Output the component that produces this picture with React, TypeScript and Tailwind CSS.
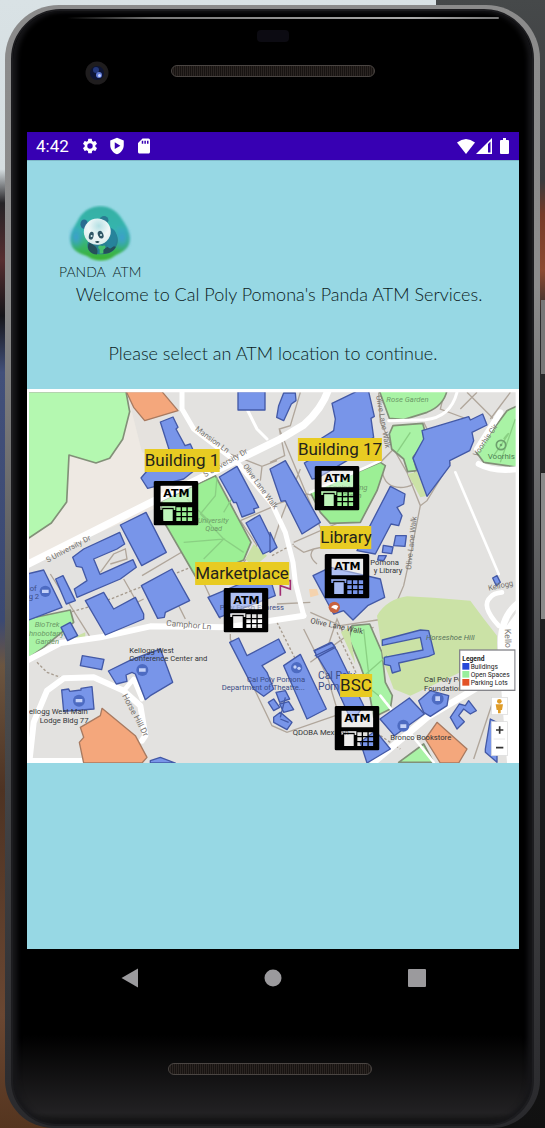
import React from "react";

type Place = {
  id: string;
  name: string;
  label: [number, number];
  pin: [number, number];
};

const MAP_W = 492;
const MAP_H = 374;

const places: Place[] = [
  { id: "b1", name: "Building 1", label: [155, 60], pin: [149, 92] },
  { id: "b17", name: "Building 17", label: [313, 49], pin: [310, 77] },
  { id: "library", name: "Library", label: [319, 137], pin: [320, 165] },
  { id: "market", name: "Marketplace", label: [215, 173], pin: [219, 199] },
  { id: "bsc", name: "BSC", label: [329, 285], pin: [330, 317] },
];

const at = ([x, y]: [number, number]) => ({
  left: `${(x / MAP_W) * 100}%`,
  top: `${(y / MAP_H) * 100}%`,
});

function AtmIcon() {
  return (
    <svg viewBox="0 0 134 132" className="block w-full" aria-hidden="true">
      <rect x="21" y="14" width="94" height="49" fill="#fff" opacity=".4" />
      <path
        fillRule="evenodd"
        d="M5 0H129Q134 0 134 5V127Q134 132 129 132H5Q0 132 0 127V5Q0 0 5 0ZM21 14V63H115V14ZM20 75V86H26V80H60V86H65V75ZM29 84V119H57V84ZM68 78V89H81V78ZM85 78V89H98V78ZM102 78V89H115V78ZM68 93V104H81V93ZM85 93V104H98V93ZM102 93V104H115V93ZM68 108V119H81V108ZM85 108V119H98V108ZM102 108V119H115V108Z"
      />
      <path fill="#fff" opacity=".35" d="M29 84H57V119H29ZM20 75H65V80H20Z" />
      <text
        x="68"
        y="49"
        textAnchor="middle"
        fontSize="33"
        fontWeight="bold"
        fontFamily="DejaVu Sans, sans-serif"
      >
        ATM
      </text>
    </svg>
  );
}

function Panda() {
  return (
    <svg viewBox="0 0 190 170" className="block w-16" aria-hidden="true">
      <defs>
        <linearGradient id="blob" x1="0" y1="0" x2="0" y2="1">
          <stop offset="0" stopColor="#35b0a4" />
          <stop offset=".45" stopColor="#36b5ae" />
          <stop offset="1" stopColor="#3bb22a" />
        </linearGradient>
        <radialGradient id="side" cx=".5" cy=".5" r=".5">
          <stop offset="0" stopColor="#3b9fd0" />
          <stop offset="1" stopColor="#3b9fd0" stopOpacity="0" />
        </radialGradient>
        <radialGradient id="face" cx=".6" cy=".3" r=".8">
          <stop offset="0" stopColor="#b4e0e4" />
          <stop offset=".5" stopColor="#f0f8f8" />
          <stop offset="1" stopColor="#d7e8e8" />
        </radialGradient>
        <filter id="soft" x="-10%" y="-10%" width="120%" height="120%">
          <feGaussianBlur stdDeviation="3" />
        </filter>
      </defs>
      <g filter="url(#soft)">
        <path
          d="M92 4C124 2 148 20 163 46C178 68 188 92 181 115C174 136 153 143 137 152C117 168 80 170 60 154C42 145 16 140 10 117C3 94 14 71 27 50C40 23 61 6 92 4Z"
          fill="url(#blob)"
        />
        <ellipse cx="24" cy="96" rx="24" ry="38" fill="url(#side)" />
        <ellipse cx="160" cy="98" rx="30" ry="42" fill="url(#side)" />
      </g>
      <path d="M114 72C142 70 156 99 144 122C133 149 91 151 71 141C52 131 56 109 65 100Z" fill="#287f92" />
      <path d="M63 111C52 129 66 146 86 147C91 134 84 124 76 119ZM100 143C115 150 139 136 142 124C121 119 106 127 100 143Z" fill="#25505b" />
      <path d="M121 67C151 69 154 119 126 129C112 128 112 104 120 93Z" fill="#27839b" />
      <ellipse cx="48" cy="57" rx="11" ry="14" fill="#2a6d91" />
      <ellipse cx="107" cy="45" rx="13" ry="12" fill="#2a7c91" />
      <ellipse cx="87" cy="79" rx="40" ry="39" fill="url(#face)" transform="rotate(-12 87 79)" />
      <ellipse cx="69" cy="91" rx="7" ry="12" fill="#315767" transform="rotate(12 69 91)" />
      <ellipse cx="97" cy="88" rx="8" ry="12" fill="#315767" transform="rotate(-22 97 88)" />
      <circle cx="70" cy="92" r="3" fill="#d9f3f3" />
      <circle cx="98" cy="89" r="3" fill="#d9f3f3" />
      <path d="M80 109Q87 105 94 109Q87 116 80 109Z" fill="#204650" />
      <path d="M94 144V132C84 125 93 116 102 122C110 116 117 127 105 132V144Z" fill="#44bf6b" />
    </svg>
  );
}

function CampusMap() {
  return (
    <svg
      viewBox="0 0 1476 1122"
      className="block w-full"
      role="img"
      aria-label="Campus map"
      fontFamily="Roboto, sans-serif"
    >
      <rect width="1476" height="1122" fill="#e3e2e0" />
      <path d="M6 8H310L365 90L450 330L0 525Z" fill="#eee9e3" />
      <path d="M300 10L345 190L440 230L400 80Z" fill="#e5e2de" />

      {/* Footpaths */}
      <g fill="none" stroke="#b0a69b" strokeWidth="4">
        <path d="M610 195L705 232L750 215M705 232L700 275M640 395L745 350M345 560L480 480M640 395L690 470L650 520M820 10L790 110L757 120L890 440M757 120L773 200L729 220M820 240L765 380L735 470M735 350L840 315L860 320L1060 220L1100 180L1060 100L1055 10M1100 180L1140 250L1180 350L1150 500L1130 590L1100 660L1070 690L940 710L850 670M800 460L960 390M800 470L830 490L860 480L950 460M860 480Q840 500 870 525M1180 350L1200 335L1270 220M1190 100L1210 140M1250 20L1240 60L1320 90M1320 10L1400 90M1450 10L1390 90M1300 60L1350 10M1065 240Q1070 300 1130 295Q1180 290 1160 240L1140 220" />
        <path d="M70 555L190 745M290 570L330 640L350 630M450 640L475 690M525 570L580 690M610 735V750L735 1010L780 1030L925 980M750 645L850 640M830 720L900 860L930 960M850 820L960 740L1040 715M900 780L930 690L960 760M1340 1110L1400 930L1420 940M460 485L640 560M220 550L260 495L295 480L300 510L250 525" />
      </g>
      <g fill="none" stroke="#a69b8e" strokeWidth="4" strokeDasharray="8 6">
        <path d="M0 705L200 650L530 520M735 500L800 465M750 700L830 860M930 730L1010 900M30 820L60 850L100 865M1060 1040L1120 1080" />
      </g>

      {/* Open spaces */}
      <g fill="#a9f3a5" stroke="#829078" strokeWidth="5" strokeLinejoin="round">
        <path d="M0 8H297L308 68L287 151L248 208L207 222L126 198L119 339L73 402L0 451Z" fill="#b4f8b0" />
        <path d="M405 335L565 260L672 460L650 513L510 570L400 380Z" fill="#9cef95" />
        <path d="M1057 5H1260Q1250 50 1200 70L1130 92L1087 88Z" />
        <path d="M1098 110L1187 103L1200 150L1158 205L1170 245L1142 248L1130 210L1094 180L1087 135Z" />
        <path d="M1472 50L1440 65L1348 190L1370 220L1472 235Z" />
        <path d="M850 310L1060 220L1075 230L1050 305L1000 400L910 403L880 370Z" fill="#9cef95" />
        <path d="M0 690L130 663L140 700L50 775L0 810Z" />
        <path d="M975 710L1028 705L1065 790L1075 880L1096 920L1090 960L1040 985L1025 900L1000 830L966 750Z" />
        <path d="M1115 1120L1190 1065L1220 1120Z" />
      </g>
      <g fill="#cbe2a6">
        <path d="M1050 680Q1080 630 1140 622L1220 626L1330 635Q1370 690 1410 740L1410 800L1300 850L1150 920L1100 900L1070 820Z" />
        <path d="M1142 255L1170 248L1200 320L1180 325Z" />
        <path d="M655 510L680 465L720 500L680 535Z" />
        <path d="M942 730L965 715L985 825Z" />
        <path d="M140 745L175 730V755Z" />
      </g>
      <g fill="none" stroke="#8ad083" strokeWidth="4">
        <path d="M570 265L565 320L520 375L590 450L650 490M590 370L620 320M470 460L590 450L530 510M540 390L480 330M1110 190L1150 130M1400 200Q1470 100 1430 150M1420 220L1465 90M1010 720L1030 900L1080 940M1000 870L1080 800" />
      </g>

      {/* Roads */}
      <g fill="none" stroke="#fff" strokeLinecap="round" strokeLinejoin="round">
        <g strokeWidth="22">
          <path d="M0 527L380 336L760 150L830 108Q885 60 905 0" />
          <path d="M465 0V60L500 120L630 220L735 345L775 430L798 520L805 580L830 680" strokeWidth="15" />
          <path d="M0 815L100 762L220 745L370 712L600 715L830 680" strokeWidth="18" />
        </g>
        <path d="M8 1110L20 1000L60 905L110 868L200 865L290 905L340 950L355 1040L345 1055" strokeWidth="18" />
        <path d="M290 905L320 870L345 930" strokeWidth="14" />
        <path d="M0 1115H165" strokeWidth="16" />
        <path d="M660 60L690 120L720 150" strokeWidth="9" />
        <path d="M1085 95L1195 92Q1270 85 1290 10" strokeWidth="9" />
        <path d="M1355 225Q1400 250 1476 240M1420 70L1350 180" strokeWidth="18" />
        <path d="M1285 250L1415 555" strokeWidth="8" />
        <path d="M1415 710Q1360 650 1390 625Q1400 612 1425 610" strokeWidth="14" />
        <path d="M1476 640Q1410 690 1425 800L1450 1120" strokeWidth="20" />
        <path d="M1425 740L1476 670V1120H1450Z" fill="#fff" strokeWidth="12" />
        <path d="M1040 1120L1200 985L1310 920L1410 860" strokeWidth="20" />
        <path d="M1060 920L1220 1120M850 310L1060 215" strokeWidth="8" />
      </g>

      {/* Parking lots */}
      <g fill="#f4a77c" stroke="#a87a60" strokeWidth="4" strokeLinejoin="round">
        <path d="M298 8H405L453 65L353 95L320 55Z" />
        <path d="M225 958L325 1040L360 1105L345 1122H170L157 1060L170 1045L160 1015L220 980Z" />
        <path d="M1230 1000L1320 1080L1295 1122H1240L1195 1050Z" />
      </g>

      {/* Buildings */}
      <g fill="#7895e9" stroke="#4359a6" strokeWidth="4" strokeLinejoin="round">
        <path d="M400 99L438 84L453 115L447 120L474 170L490 165L520 230L470 270L362 298L342 267L365 240L440 225Z" />
        <path d="M633 8H714V63H633Z" />
        <path d="M577 264L630 232L695 355L680 360L683 370L645 384L628 340L620 341Z" />
        <path d="M657 402L698 378L747 477L708 495Z" />
        <path d="M280 408L357 370L418 490L344 530Z" />
        <path d="M137 505L170 480L278 430L293 465L270 480L200 510L219 556L318 512L328 535L280 570L150 625L142 600L180 575L165 535L148 532Z" />
        <path d="M0 555L50 543L105 655L0 695Z" />
        <path d="M86 570L108 560L145 635L118 645Z" />
        <path d="M343 590L435 540L488 635L415 670L412 685L392 688Z" />
        <path d="M175 635L230 610L260 660L325 625L350 675V690L235 738Z" />
        <path d="M102 715L130 700L152 740L122 755Z" />
        <path d="M166 800L231 811L224 842L160 830Z" />
        <path d="M244 846L315 811L400 780L437 880L370 920L355 932L325 855L315 850L297 858L300 877L268 885Z" />
        <path d="M104 903L125 900L128 907L162 903V898L195 893L201 960L110 967Z" />
        <path d="M370 1115L400 1105L445 1122H370Z" />
        <path d="M543 625L650 580L730 570L745 620L577 685Z" />
        <path d="M608 760L635 747L660 800L755 750L775 790L705 830L720 850L740 900L710 922L680 900Z" />
        <path d="M747 910L775 905L788 930L758 940ZM758 945L785 938L800 962L770 970ZM724 940L740 930L758 955L740 965ZM740 985L760 970L795 1000L780 1022L740 1000Z" />
        <path d="M770 830L820 796L898 960L840 990Z" />
        <path d="M861 785L912 760L930 785L1010 950L975 1000L930 900Z" />
        <path d="M863 785L915 762L925 775L870 805Z" />
        <path d="M729 240L775 215L880 400L825 435L775 335L762 337Z" />
        <path d="M729 430L750 475L729 490Z" />
        <path d="M770 12H805L807 35L793 45L770 95L749 85L755 50Z" />
        <path d="M832 222L930 165L1010 165L960 215L870 268L855 270Z" />
        <path d="M915 43L988 8H1025L1042 82L1032 88L1040 145L1010 165L900 200L880 150L920 125L925 90Z" />
        <path d="M1185 125L1325 83L1330 93L1367 75L1380 108L1335 130L1340 155L1328 185L1268 215L1269 230L1200 322L1158 208L1190 150Z" />
        <path d="M1090 292L1134 315L1130 345L1110 355L1125 380L1115 410L1092 405L1045 495L990 485Z" />
        <path d="M1106 440H1138L1134 472L1100 470ZM1069 469L1098 474L1094 494L1066 490ZM1055 500H1078L1070 515L1052 513Z" />
        <path d="M858 560L910 535L1060 570L1073 625L1022 650L978 693L950 665L920 675Z" />
        <path d="M1066 753L1180 723L1205 725L1222 795L1205 802L1115 822L1120 845L1096 852L1090 830L1072 826V805L1188 783L1180 745L1066 769Z" />
        <path d="M1059 990L1147 927L1192 975L1102 1040Z" />
        <path d="M1000 1060L1045 1025L1090 1080L1040 1110L1020 1122Z" />
        <path d="M1175 935L1210 905L1265 920L1260 950L1210 982L1190 970Z" />
        <path d="M1270 985L1297 945L1315 950L1325 935L1348 965L1330 975L1310 960L1295 980L1312 998L1290 1020Z" />
        <path d="M1375 1080L1390 990L1410 1000V1120L1375 1090Z" />
        <path d="M1397 567L1410 560L1420 580L1408 590Z" />
      </g>
      <path d="M730 575H790V600L760 590V620" fill="none" stroke="#a12d72" strokeWidth="5" />
      <path d="M863 801L922 773M760 990L785 1000M775 925L760 985" stroke="#4359a6" strokeWidth="4" />

      {/* Building badges */}
      <g fill="#4d6bc2">
        <circle cx="55" cy="607" r="17" />
        <circle cx="346" cy="843" r="18" />
        <circle cx="156" cy="935" r="18" />
        <circle cx="809" cy="836" r="17" />
        <circle cx="1129" cy="1010" r="18" />
        <circle cx="1232" cy="929" r="18" />
      </g>
      <g fill="#c5d2f8">
        <path d="M45 602H65V612H45ZM336 838H356V848H336ZM146 930H166V940H146ZM1120 1006H1138V1017H1120ZM1225 922H1239V936H1225Z" />
        <circle cx="804" cy="834" r="5" />
        <circle cx="816" cy="838" r="5" />
      </g>
      <circle cx="922" cy="655" r="17" fill="#c8623f" />
      <path d="M912 655Q922 642 934 652L928 662Z" fill="#fff" />
      <path d="M846 600L870 600L875 618L850 625Z" fill="#f5d3ae" />
      <circle cx="1422" cy="168" r="14" fill="none" stroke="#6d9f6d" strokeWidth="5" />
      <circle cx="1422" cy="168" r="4" fill="#6d9f6d" />

      {/* Street names */}
      <g fill="#77746f" fontSize="23">
        <text transform="translate(62 521) rotate(-28)">S University Dr</text>
        <text transform="translate(535 265) rotate(-30)">S University Dr</text>
        <text transform="translate(503 123) rotate(36)">Mansion Ln</text>
        <text transform="translate(647 232) rotate(54)">Olive Lane Walk</text>
        <text transform="translate(1047 20) rotate(80)">Olive Lane Walk</text>
        <text transform="translate(1152 543) rotate(-84)">Olive Lane Walk</text>
        <text transform="translate(1350 205) rotate(-56)">Voorhis Cir</text>
        <text transform="translate(417 710) rotate(5)" fontSize="25">Camphor Ln</text>
        <text transform="translate(285 920) rotate(62)" fontSize="25">Horse Hill Dr</text>
        <text transform="translate(849 702) rotate(12)" fill="#4a4846">Olive Lane Walk</text>
        <text transform="translate(1433 720) rotate(88)" fontSize="26">Kello</text>
        <text transform="translate(1385 605) rotate(-12)">Kellogg</text>
      </g>
      <g fill="#6c9a67" fontSize="23" fontStyle="italic">
        <text x="1078" y="39">Rose Garden</text>
        <text x="512" y="402" fontSize="22">University</text>
        <text x="535" y="427" fontSize="22">Quad</text>
        <text x="905" y="302">Engineering</text>
        <text x="945" y="326">Green</text>
        <text x="23" y="715">BioTrek</text>
        <text x="6" y="740">hnobotany</text>
        <text x="25" y="765">Garden</text>
        <text x="1197" y="752" fill="#58725c">Horseshoe Hill</text>
      </g>
      <text x="1382" y="209" fontSize="24" fill="#4e8053">Voorhis</text>
      <g fill="#343638" fontSize="23">
        <text x="307" y="792">Kellogg West</text>
        <text x="307" y="817">Conference Center and</text>
        <text x="6" y="976">ellogg West Main</text>
        <text x="38" y="1001">Lodge Bldg 77</text>
        <text x="1191" y="880">Cal Poly Pomona</text>
        <text x="1191" y="905">Foundation</text>
        <text x="797" y="1037">QDOBA Mexican</text>
        <text x="1090" y="1054">Bronco Bookstore</text>
        <text x="1030" y="527">Pomona</text>
        <text x="1040" y="552">y Library</text>
      </g>
      <g fill="#3c4d86" fontSize="23">
        <text x="8" y="605">of</text>
        <text x="5" y="630">g 2</text>
        <text x="660" y="879">Cal Poly Pomona</text>
        <text x="584" y="904">Department of Theatre...</text>
        <text x="578" y="662">Poly Fresh Express</text>
        <text x="873" y="869" fontSize="31">Cal Poly</text>
        <text x="873" y="902" fontSize="31">Pomona</text>
      </g>

      {/* Legend */}
      <rect x="1298" y="783" width="166" height="121" fill="#fff" stroke="#85858a" strokeWidth="4" />
      <path d="M1306 822H1327V842H1306Z" fill="#2647d8" />
      <path d="M1306 846H1327V866H1306Z" fill="#98ef9c" />
      <path d="M1306 870H1327V890H1306Z" fill="#e35327" />
      <g fontSize="20" fill="#222">
        <text x="1306" y="815" fontWeight="bold">Legend</text>
        <text x="1331" y="839">Buildings</text>
        <text x="1331" y="864">Open Spaces</text>
        <text x="1331" y="889">Parking Lots</text>
      </g>
      <g fill="#fff" stroke="#d8d8d8" strokeWidth="2">
        <rect x="1393" y="925" width="48" height="52" />
        <rect x="1393" y="998" width="48" height="102" />
      </g>
      <circle cx="1417" cy="937" r="7" fill="#df9c28" />
      <path d="M1406 946H1428L1425 963H1421V973H1413V963H1409Z" fill="#df9c28" />
      <path d="M1407 1023H1429M1418 1012V1034M1407 1076H1429" stroke="#333" strokeWidth="5" />
      <path d="M1400 1050H1434" stroke="#ddd" strokeWidth="2" />

      {/* White margin of the map sheet */}
      <path d="M0 0H1476V1122H1466V10H6V1122H0Z" fill="#fff" />
    </svg>
  );
}

function StatusBar() {
  return (
    <div className="flex h-7 items-center bg-[#3700b3] pr-[10px] pl-[9px] text-white">
      <span className="mr-3 font-[Roboto,sans-serif] text-[17px] leading-7">4:42</span>
      <div className="flex items-center gap-[9px]">
        <svg viewBox="0 0 24 24" className="w-[18px]" fill="currentColor" aria-hidden="true">
          <path d="M19.14 12.94c.04-.3.06-.61.06-.94s-.02-.64-.07-.94l2.03-1.58a.5.5 0 0 0 .12-.61l-1.92-3.32a.49.49 0 0 0-.59-.22l-2.39.96a7 7 0 0 0-1.62-.94l-.36-2.54a.48.48 0 0 0-.48-.41h-3.84a.47.47 0 0 0-.47.41l-.36 2.54c-.59.24-1.13.57-1.62.94l-2.39-.96a.48.48 0 0 0-.59.22L2.74 8.87a.47.47 0 0 0 .12.61l2.03 1.58a6 6 0 0 0-.02 1.88l-2.03 1.58a.5.5 0 0 0-.12.61l1.92 3.32c.12.22.37.29.59.22l2.39-.96c.5.38 1.03.7 1.62.94l.36 2.54c.05.24.24.41.48.41h3.84c.24 0 .44-.17.47-.41l.36-2.54a7 7 0 0 0 1.62-.94l2.39.96c.22.08.47 0 .59-.22l1.92-3.32a.47.47 0 0 0-.12-.61zM12 15.6a3.6 3.6 0 1 1 0-7.2 3.6 3.6 0 0 1 0 7.2z" />
        </svg>
        <svg viewBox="0 0 24 24" className="w-[18px]" fill="currentColor" aria-hidden="true">
          <path fillRule="evenodd" d="M12 1 3 4.5V11c0 5.5 3.8 10.300 9 12 5.200-1.700 9-6.500 9-12V4.500ZM9 7v9l7.500-4.500Z" />
        </svg>
        <svg viewBox="0 0 24 24" className="w-[18px]" fill="currentColor" aria-hidden="true">
          <path fillRule="evenodd" d="M18 2h-8L4 8v12c0 1.100.9 2 2 2h12c1.100 0 2-.9 2-2V4a2 2 0 0 0-2-2Zm-9 3h2v4H9Zm3.500 0h2v4h-2ZM16 5h2v4h-2Z" />
        </svg>
      </div>
      <div className="ml-auto flex items-center">
        <svg viewBox="0 0 18 15" className="w-[18px]" fill="currentColor" aria-hidden="true">
          <path d="M0 3.500Q9-3.500 18 3.500L9 15Z" />
        </svg>
        <svg viewBox="0 0 16 16" className="ml-px w-4" fill="currentColor" aria-hidden="true">
          <path fillRule="evenodd" d="M16 0V16H0ZM12 6V14.500H14.500V3.500Z" />
        </svg>
        <svg viewBox="0 0 9 16" className="ml-2 w-[9px]" fill="currentColor" aria-hidden="true">
          <path d="M3 0h3v2h2q1 0 1 1v12q0 1-1 1H1q-1 0-1-1V3q0-1 1-1h2Z" />
        </svg>
      </div>
    </div>
  );
}

function Speaker() {
  return (
    <div className="h-3 w-[204px] rounded-full border border-[#4a4542] bg-[repeating-linear-gradient(90deg,#171311_0px,#171311_1px,#2b2522_1px,#2b2522_2px)]" />
  );
}

export default function App() {
  return (
    <div className="relative isolate min-h-screen overflow-hidden px-[5px] pt-[5px]">
      <div className="absolute inset-0 -z-10 flex">
        <div className="w-4/5 bg-[linear-gradient(180deg,#d9e2e5_0%,#d5dde0_15%,#252326_18%,#572e30_23%,#151519_28%,#42507a_33%,#3b4972_55%,#6b5540_59%,#4e3323_70%,#6a4732_90%,#55351f_100%)]" />
        <div className="flex-1 bg-[linear-gradient(180deg,#46494a_0%,#3a3a3c_16%,#753a27_19%,#8c4a31_24%,#2b2b2c_28%,#1d1d1f_60%,#111_100%)]" />
      </div>
      <div className="absolute top-[300px] right-0 h-[74px] w-1 bg-[#777]" />
      <div className="absolute top-[472px] right-0 h-[148px] w-1 border-y border-[#222] bg-[#8a8a8a]" />

      <div className="rounded-t-[54px] rounded-b-[48px] bg-[linear-gradient(180deg,#8b8b8b_0%,#8c8c8c_25%,#4b4c4e_60%,#29292c_100%)] px-[6px] pt-1 pb-[2px]">
        <div className="rounded-t-[50px] rounded-b-[46px] border-2 border-[#1c1c1f] bg-[linear-gradient(180deg,#000_0%,#000_92%,#222123_99%,#111_100%)] pr-[13px] pl-[14px] shadow-[inset_4px_0_5px_#17171a,inset_-4px_0_5px_#17171a]">
          <header className="relative h-[121px]">
            <div className="absolute top-[6px] right-5 left-10 h-[2px] rounded-full bg-[linear-gradient(90deg,transparent,#777_20%,#aaa_80%,#777)]" />
            <div className="flex flex-col items-center pt-[19px]">
              <div className="h-3 w-8 rounded-sm bg-[#0c0b12]" />
              <div className="mt-[23px]">
                <Speaker />
              </div>
            </div>
            <svg viewBox="0 0 24 24" className="absolute top-[50px] left-[58px] w-6" aria-hidden="true">
              <circle cx="12" cy="12" r="11.500" fill="#1f1d1e" />
              <circle cx="12" cy="12" r="7" fill="#0d1433" />
              <circle cx="11" cy="9" r="3" fill="#233779" />
              <circle cx="14" cy="14" r="3" fill="#5f79d4" />
              <circle cx="14.500" cy="14.500" r="1.500" fill="#c6d4ff" />
            </svg>
          </header>

          <main className="bg-[#97d8e4]">
            <StatusBar />
            <div className="border-t border-[#7fb8c9] pt-11 pb-6 font-[Lato,sans-serif] text-[#0b1a21]">
              <div className="ml-8 flex w-fit flex-col items-center">
                <Panda />
                <span className="text-sm leading-5 font-light whitespace-pre">PANDA  ATM</span>
              </div>
              <h1 className="pl-3 text-center text-lg leading-6 font-light">
                Welcome to Cal Poly Pomona's Panda ATM Services.
              </h1>
              <p className="mt-[35px] text-center text-lg leading-6 font-light">
                Please select an ATM location to continue.
              </p>
            </div>

            <div className="relative">
              <CampusMap />
              {places.map((p) => (
                <React.Fragment key={p.id}>
                  <label
                    htmlFor={p.id}
                    style={at(p.label)}
                    className="absolute -translate-x-1/2 bg-[#e8cb22] font-[Roboto,sans-serif] text-[17px] leading-[23px] whitespace-nowrap text-[#24231c]"
                  >
                    {p.name}
                  </label>
                  <button
                    id={p.id}
                    type="button"
                    style={at(p.pin)}
                    className="absolute w-[45px] -translate-x-1/2"
                  >
                    <AtmIcon />
                  </button>
                </React.Fragment>
              ))}
            </div>
            <div className="h-[186px]" />
          </main>

          <nav className="grid grid-cols-[1fr_82px_1fr] items-center justify-items-center pt-[19px] text-[#9b9a9d]">
            <button type="button" aria-label="Back">
              <svg viewBox="0 0 18 20" className="w-[18px]" fill="currentColor" aria-hidden="true">
                <path d="M17 .5V19.500L.5 10Z" />
              </svg>
            </button>
            <button type="button" aria-label="Home">
              <svg viewBox="0 0 18 18" className="w-[18px]" fill="currentColor" aria-hidden="true">
                <circle cx="9" cy="9" r="8.500" />
              </svg>
            </button>
            <button type="button" aria-label="Recent apps">
              <svg viewBox="0 0 18 18" className="w-[18px]" fill="currentColor" aria-hidden="true">
                <rect width="18" height="18" rx="1" />
              </svg>
            </button>
          </nav>
          <footer className="flex justify-center pt-[75px] pr-[6px] pb-[49px]">
            <Speaker />
          </footer>
        </div>
      </div>
    </div>
  );
}
